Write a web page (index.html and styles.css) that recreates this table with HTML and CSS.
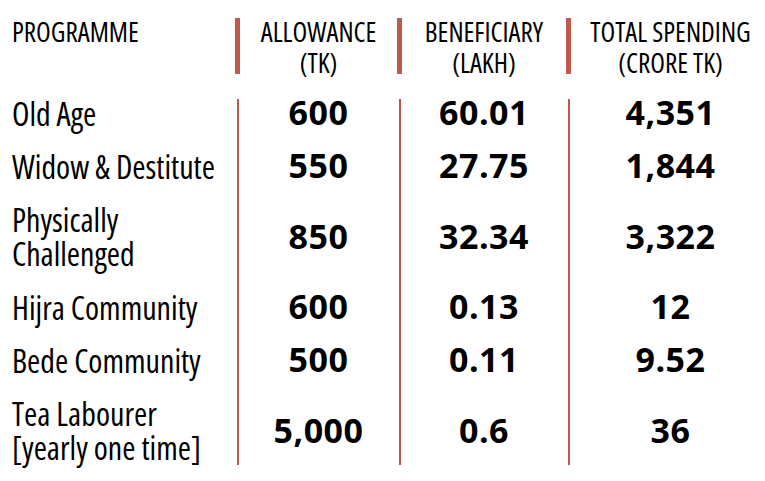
FILE: index.html
```html
<!DOCTYPE html>
<html lang="en">
<head>
<meta charset="utf-8">
<title>Allowance programmes</title>
<link rel="stylesheet" href="styles.css">
</head>
<body>
<div class="table">
  <div class="rule rule-a"></div>
  <div class="rule rule-b"></div>
  <div class="rule rule-c"></div>

  <div class="head head-first">PROGRAMME</div>
  <div class="bar"></div>
  <div class="head">ALLOWANCE<br>(TK)</div>
  <div class="bar"></div>
  <div class="head">BENEFICIARY<br>(LAKH)</div>
  <div class="bar"></div>
  <div class="head head-last">TOTAL SPENDING<br>(CRORE TK)</div>

  <div class="cell lbl">Old Age</div>
  <div class="cell num">600</div>
  <div class="cell num">60.01</div>
  <div class="cell num last">4,351</div>

  <div class="cell lbl">Widow &amp; Destitute</div>
  <div class="cell num">550</div>
  <div class="cell num">27.75</div>
  <div class="cell num last">1,844</div>

  <div class="cell lbl two">Physically<br>Challenged</div>
  <div class="cell num">850</div>
  <div class="cell num">32.34</div>
  <div class="cell num last">3,322</div>

  <div class="cell lbl">Hijra Community</div>
  <div class="cell num">600</div>
  <div class="cell num">0.13</div>
  <div class="cell num last">12</div>

  <div class="cell lbl">Bede Community</div>
  <div class="cell num">500</div>
  <div class="cell num">0.11</div>
  <div class="cell num last">9.52</div>

  <div class="cell lbl two">Tea Labourer<br>[yearly one time]</div>
  <div class="cell num">5,000</div>
  <div class="cell num">0.6</div>
  <div class="cell num last">36</div>
</div>
</body>
</html>
```
FILE: styles.css
```css
html, body {
  margin: 0;
  padding: 0;
  background: #ffffff;
  overflow: hidden;
}

.table {
  display: grid;
  grid-template-columns: 235px 5px 157px 5px 164px 5px 1fr;
  width: 765px;
  color: #000;
  font-family: "Open Sans", "Noto Sans", sans-serif;
  font-stretch: 75%;
}

.head {
  padding: 16px 0 10px;
  font-size: 27px;
  font-weight: 400;
  line-height: 31px;
  text-align: center;
  white-space: nowrap;
}

.head-first {
  text-align: left;
  padding-left: 12px;
}

.head-last {
  padding-left: 5px;
}

.bar {
  align-self: start;
  margin-top: 18px;
  height: 56px;
  width: 5px;
  background: #c0584b;
}

.rule {
  grid-row: 2 / 8;
  justify-self: center;
  width: 2px;
  margin: 11px 0;
  background: #c0584b;
}

.rule-a { grid-column: 2; }
.rule-b { grid-column: 4; }
.rule-c { grid-column: 6; }

.cell {
  display: flex;
  align-items: center;
  padding: 9px 0 11px;
  white-space: nowrap;
}

.lbl {
  padding-left: 12px;
  font-size: 32px;
  line-height: 33px;
}

.lbl.two {
  line-height: 34px;
}

.num {
  justify-content: center;
  padding: 8px 0 12px;
  font-stretch: 100%;
  font-weight: 700;
  font-size: 34px;
  line-height: 33px;
  letter-spacing: 0.5px;
}

.num.last {
  padding-left: 5px;
}
```
